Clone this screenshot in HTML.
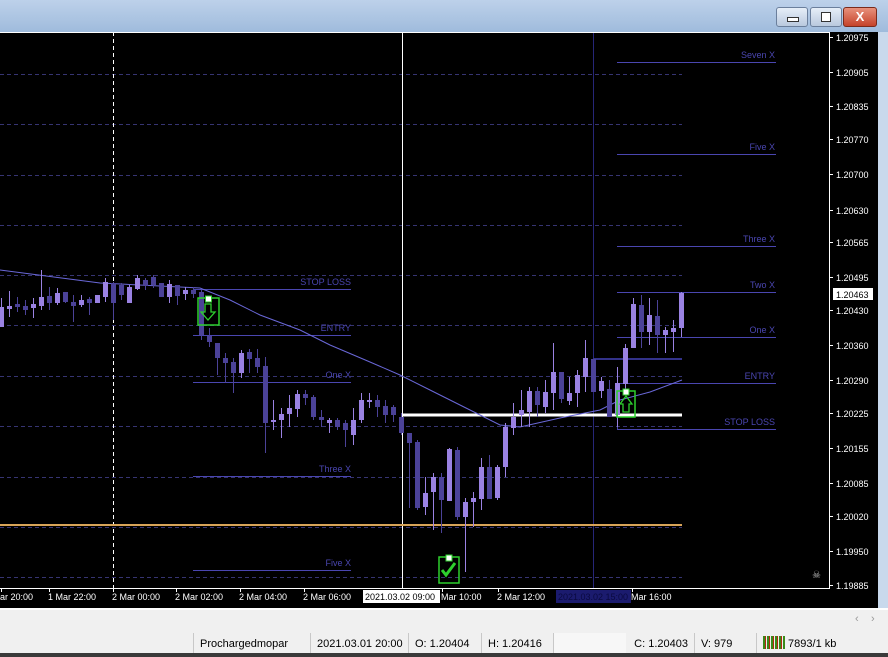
<!DOCTYPE html>
<html><head><meta charset="utf-8"><style>
html,body{margin:0;width:888px;height:657px;overflow:hidden}
body{background:#000;font-family:"Liberation Sans",sans-serif;position:relative}
#title{position:absolute;left:0;top:0;width:888px;height:32px;background:linear-gradient(#bdd1ea,#9fbbdc)}
.btn{position:absolute;top:7px;height:18px;border:1px solid #6b7f9c;border-radius:3px;background:linear-gradient(#e6eef8,#b9c9de)}
#status{position:absolute;left:0;top:630px;width:888px;height:27px;background:#f0f0f0;font-size:11px;color:#000;overflow:hidden}
.sec{position:absolute;top:3px;height:22px;line-height:22px;border-left:1px solid #c8c8c8;padding-left:6px;white-space:nowrap;overflow:hidden;box-sizing:border-box}
svg text{font-family:"Liberation Sans",sans-serif}
</style></head><body>
<div id="title">
<div class="btn" style="left:776px;width:30px"><div style="position:absolute;left:10px;top:9px;width:10px;height:3px;border:1px solid #333;background:#fff"></div></div>
<div class="btn" style="left:810px;width:30px"><div style="position:absolute;left:10px;top:4px;width:8px;height:8px;border:1px solid #333;background:#fff"></div></div>
<div class="btn" style="left:843px;width:32px;background:linear-gradient(#e8917c,#c5432a);border-color:#7a2a1a;color:#fff;font-weight:bold;font-size:13px;text-align:center;line-height:18px">X</div>
</div>
<div style="position:absolute;left:878px;top:32px;width:10px;height:578px;background:#c9d9ec"></div>
<svg id="ch" width="878" height="578" style="position:absolute;left:0;top:32px" viewBox="0 32 878 578"></svg>
<div style="position:absolute;left:0;top:608px;width:888px;height:22px;background:#f0f0f0;border-top:2px solid #fff;box-sizing:border-box;color:#999;font-size:11px">
<span style="position:absolute;left:855px;top:3px">‹</span><span style="position:absolute;left:871px;top:3px">›</span></div>
<div id="status">
<div class="sec" style="left:193px;width:117px">Prochargedmopar</div>
<div class="sec" style="left:310px;width:98px">2021.03.01 20:00</div>
<div class="sec" style="left:408px;width:73px">O: 1.20404</div>
<div class="sec" style="left:481px;width:72px">H: 1.20416</div>
<div class="sec" style="left:553px;width:73px;background:#f7f7f7"></div>
<div class="sec" style="left:620px;width:74px;text-align:right;padding-right:6px;border-left:none">C: 1.20403</div>
<div class="sec" style="left:694px;width:62px">V: 979</div>
<div class="sec" style="left:756px;width:110px"><span style="display:inline-block;width:22px;height:13px;vertical-align:-2px;background:repeating-linear-gradient(90deg,#3a8a1a 0 2px,#b02a10 2px 3px,transparent 3px 4px)"></span> 7893/1 kb</div>
<div style="position:absolute;left:0;top:23px;width:888px;height:4px;background:#3a3a3a"></div>
</div>
<script>
var s='';
function L(x1,y1,x2,y2,c,w,d){s+='<line x1="'+x1+'" y1="'+y1+'" x2="'+x2+'" y2="'+y2+'" stroke="'+c+'" stroke-width="'+(w||1)+'"'+(d?' stroke-dasharray="'+d+'"':'')+'/>';}
function T(x,y,t,c,sz,a){s+='<text x="'+x+'" y="'+y+'" fill="'+c+'" font-size="'+(sz||9)+'" text-anchor="'+(a||'start')+'">'+t+'</text>';}
s+='<rect x="0" y="32" width="878" height="578" fill="#000"/>';
[74,124,175,225,275,325,376,426,477,527,577].forEach(function(y){L(0,y+.5,682,y+.5,'#363472',1,'4,3');});
L(113.5,32,113.5,588,'#fff',1,'4,3');
L(593.5,32,593.5,588,'#262678',1);
L(402.5,32,402.5,588,'#fff',1);
var lc='#4a46b0';
[[62,'Seven X'],[154,'Five X'],[246,'Three X'],[292,'Two X'],[337,'One X'],[383,'ENTRY'],[429,'STOP LOSS']].forEach(function(a){L(617,a[0]+.5,776,a[0]+.5,lc,1);T(775,a[0]-4,a[1],lc,9,'end');});
L(617.5,383,617.5,429,lc,1);
[[289,'STOP LOSS'],[335,'ENTRY'],[382,'One X'],[476,'Three X'],[570,'Five X']].forEach(function(a){L(193,a[0]+.5,351,a[0]+.5,lc,1);T(351,a[0]-4,a[1],lc,9,'end');});
L(593,359,682,359,'#33328a',2);
L(402,415,682,415,'#fff',3);
L(0,525,682,525,'#d8a458',2);
s+='<polyline fill="none" stroke="#6a68d8" stroke-width="1" points="0,270 100,283 200,288 230,300 260,315 300,330 330,345 370,362 400,375 430,390 460,405 500,425 520,427 560,418 600,410 620,400 650,392 682,380"/>';
var D=[[307,327,298,327,1],[306,309,291,317,1],[304,307,297,312,0],[306,310,300,315,0],[304,308,298,318,1],[297,306,270,310,1],[296,303,287,310,0],[293,303,288,305,1],[292,302,292,303,0],[302,306,295,322,0],[300,305,295,307,1],[299,303,297,315,0],[295,303,295,303,1],[282,297,278,302,1],[283,303,282,320,0],[285,295,283,300,0],[287,303,285,303,1],[278,289,275,290,1],[280,286,278,290,0],[277,285,275,288,0],[283,297,283,297,0],[284,297,280,303,1],[285,296,285,305,0],[290,294,287,300,1],[290,294,287,298,0],[292,335,290,340,0],[336,342,328,347,0],[343,358,343,375,0],[358,363,353,383,0],[362,373,358,393,0],[353,373,350,378,1],[352,359,349,373,0],[358,367,349,373,0],[366,423,357,453,0],[420,422,400,430,1],[414,420,408,438,1],[408,414,395,427,1],[394,409,390,417,1],[394,398,390,405,0],[397,417,395,420,0],[417,420,410,427,0],[420,423,418,433,1],[420,427,418,430,0],[423,430,420,447,0],[420,435,408,445,1],[400,420,393,423,1],[400,402,393,408,1],[400,407,395,417,0],[406,415,400,423,0],[407,415,405,422,0],[417,433,413,435,0],[433,443,433,508,0],[442,508,440,510,0],[493,507,477,515,1],[477,492,473,530,1],[477,500,473,533,0],[449,501,448,501,1],[450,517,447,520,0],[502,517,498,572,1],[498,502,492,527,1],[467,499,458,510,1],[467,499,455,499,0],[467,498,465,500,1],[427,467,423,477,1],[417,428,403,435,1],[410,415,390,427,1],[391,412,387,427,1],[391,405,387,417,0],[392,407,380,413,1],[372,393,343,410,1],[372,399,372,403,0],[393,401,377,405,1],[375,393,370,407,1],[358,377,340,392,1],[359,392,359,392,0],[381,391,377,398,1],[389,417,380,417,0],[383,415,367,427,1],[348,384,344,390,1],[304,348,298,348,1],[305,332,295,348,0],[315,332,298,345,1],[316,335,300,353,0],[330,335,327,353,1],[328,332,320,352,1],[293,328,292,337,1]];
D.forEach(function(d,k){var x=1+8*k,c=d[4]?'#9a82e2':'#4b4298';L(x+.5,d[2],x+.5,d[3],c,1);s+='<rect x="'+(x-2)+'" y="'+d[0]+'" width="5" height="'+Math.max(1,d[1]-d[0])+'" fill="'+c+'"/>';});
function box(x,y,w,h){s+='<rect x="'+x+'" y="'+y+'" width="'+w+'" height="'+h+'" fill="none" stroke="#2ed02e" stroke-width="1.5"/><rect x="'+(x+w/2-3)+'" y="'+(y-2)+'" width="6" height="6" fill="#fff" stroke="#2ed02e"/>';}
box(198,298,21,27);s+='<path d="M205,304h6v8h4l-7,8-7-8h4z" fill="none" stroke="#2ed02e" stroke-width="1.3"/>';
box(617,391,18,26);s+='<path d="M623,412h6v-8h3l-6,-8-6,8h3z" fill="none" stroke="#2ed02e" stroke-width="1.3"/>';
box(439,557,20,26);s+='<path d="M442,570l4,5 9,-12" fill="none" stroke="#2ed02e" stroke-width="3"/>';
L(0,32.5,830,32.5,'#fff',1);L(829.5,32,829.5,588,'#fff',1);L(0,588.5,830,588.5,'#fff',1);
[[37,'1.20975'],[72,'1.20905'],[106,'1.20835'],[139,'1.20770'],[174,'1.20700'],[210,'1.20630'],[242,'1.20565'],[277,'1.20495'],[310,'1.20430'],[345,'1.20360'],[380,'1.20290'],[413,'1.20225'],[448,'1.20155'],[483,'1.20085'],[516,'1.20020'],[551,'1.19950'],[585,'1.19885']].forEach(function(a){L(830,a[0]+.5,833,a[0]+.5,'#fff');T(836,a[0]+4,a[1],'#fff',9);});
s+='<rect x="833" y="288" width="40" height="12" fill="#fff"/>';T(836,298,'1.20463','#000',9);
T(812,578,'☠','#bbb',10);
[[0,'ar 20:00'],[48,'1 Mar 22:00'],[112,'2 Mar 00:00'],[175,'2 Mar 02:00'],[239,'2 Mar 04:00'],[303,'2 Mar 06:00'],[441,'Mar 10:00'],[497,'2 Mar 12:00'],[631,'Mar 16:00']].forEach(function(a){L(a[0]+1.5,588,a[0]+1.5,592,'#fff');T(a[0],600,a[1],'#fff',9);});
s+='<rect x="363" y="590" width="77" height="13" fill="#fff"/>';T(365,600,'2021.03.02 09:00','#000',9);
s+='<rect x="556" y="590" width="75" height="13" fill="#1b1b6e"/>';T(558,600,'2021.03.02 15:00','#0a0a40',9);
document.getElementById('ch').innerHTML=s;
</script>
</body></html>
